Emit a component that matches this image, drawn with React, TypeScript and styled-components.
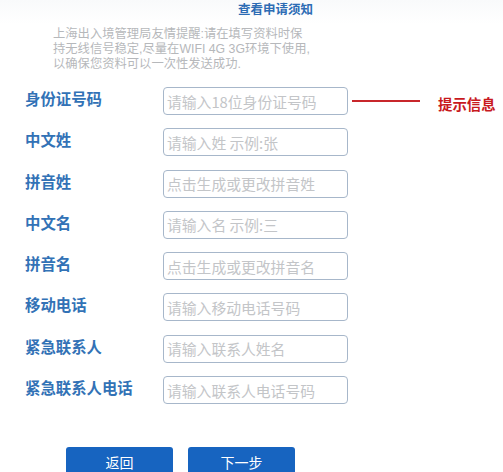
import styled, { createGlobalStyle } from 'styled-components';

const GlobalStyle = createGlobalStyle`
    html, body {
        margin: 0;
        padding: 0;
        background: #ffffff;
    }
    body {
        font-family: "Noto Sans CJK SC", "Noto Sans", sans-serif;
        width: 503px;
        height: 472px;
        overflow: hidden;
    }
`;

const Page = styled.div`
    display: flex;
    flex-direction: column;
    width: 503px;
    height: 472px;
    overflow: hidden;
`;

const Header = styled.div`
    display: flex;
    flex-direction: column;
    padding: 0 0 0 53px;
    background: linear-gradient(to bottom, #f9fafb 0px, #ffffff 24px);
`;

const Title = styled.div`
    padding-left: 185px;
    height: 18px;
    line-height: 18px;
    font-size: 12.5px;
    font-weight: bold;
    color: #2d6cb4;
`;

const Notice = styled.p`
    margin: 9px 0 0;
    font-family: "Liberation Sans", "Noto Sans CJK SC", sans-serif;
    font-size: 12.3px;
    line-height: 15px;
    color: #b6b8bb;
    white-space: nowrap;
`;

const Form = styled.div`
    display: flex;
    flex-direction: column;
    gap: 13.3px;
    padding: 15px 0 0 25px;
`;

const Row = styled.div`
    display: flex;
    align-items: center;
    height: 28px;
`;

const Label = styled.span`
    width: 138px;
    padding-bottom: 6px;
    font-size: 15.4px;
    font-weight: bold;
    color: #3272b6;
    white-space: nowrap;
`;

const Field = styled.div`
    box-sizing: border-box;
    width: 185px;
    height: 28px;
    border: 1.5px solid #a7b7ca;
    border-radius: 4px;
    padding-left: 3px;
    display: flex;
    align-items: center;
    font-size: 14.8px;
    color: #c3c5c8;
    white-space: nowrap;
    overflow: hidden;
`;

const Pointer = styled.span`
    width: 68px;
    height: 2px;
    margin: 0 0 0 4px;
    background: #c8262b;
    position: relative;
    top: -0.5px;
`;

const Hint = styled.span`
    margin-left: 18px;
    font-size: 14.4px;
    font-weight: bold;
    color: #c8191e;
    white-space: nowrap;
    position: relative;
    top: 2px;
`;

const Actions = styled.div`
    display: flex;
    gap: 15px;
    padding: 43px 0 0 66px;
`;

const Button = styled.div`
    width: 107px;
    height: 26px;
    border-radius: 3px 3px 0 0;
    background: #1764c0;
    color: #ffffff;
    font-size: 14px;
    display: flex;
    justify-content: center;
    padding-top: 5px;
    box-sizing: border-box;
`;

type FieldItem = {
    label: string,
    placeholder: string,
    hint?: string,
};

const fields: FieldItem[] = [
    { label: '身份证号码', placeholder: '请输入18位身份证号码', hint: '提示信息' },
    { label: '中文姓', placeholder: '请输入姓 示例:张' },
    { label: '拼音姓', placeholder: '点击生成或更改拼音姓' },
    { label: '中文名', placeholder: '请输入名 示例:三' },
    { label: '拼音名', placeholder: '点击生成或更改拼音名' },
    { label: '移动电话', placeholder: '请输入移动电话号码' },
    { label: '紧急联系人', placeholder: '请输入联系人姓名' },
    { label: '紧急联系人电话', placeholder: '请输入联系人电话号码' },
];

function App(): JSX.Element {
    return (
        <Page>
            <GlobalStyle />
            <Header>
                <Title>查看申请须知</Title>
                <Notice>
                    上海出入境管理局友情提醒:请在填写资料时保
                    <br />
                    持无线信号稳定,尽量在WIFI 4G 3G环境下使用,
                    <br />
                    以确保您资料可以一次性发送成功.
                </Notice>
            </Header>
            <Form>
                {fields.map((f) => (
                    <Row key={f.label}>
                        <Label>{f.label}</Label>
                        <Field>{f.placeholder}</Field>
                        {f.hint && (
                            <>
                                <Pointer />
                                <Hint>{f.hint}</Hint>
                            </>
                        )}
                    </Row>
                ))}
            </Form>
            <Actions>
                <Button>返回</Button>
                <Button>下一步</Button>
            </Actions>
        </Page>
    );
}

export default App;
